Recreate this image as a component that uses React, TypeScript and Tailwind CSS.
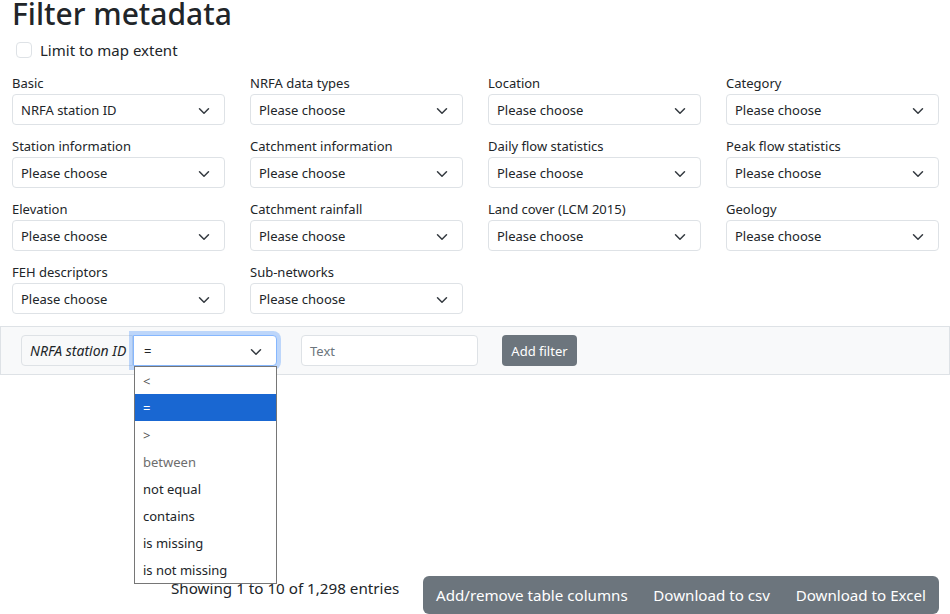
import React from "react";

const font = { fontFamily: '"Noto Sans", sans-serif' };

function Chevron({ className }: { className?: string }) {
  return (
    <svg viewBox="0 0 16 16" className={className} fill="none" stroke="#343a40" strokeWidth="2" strokeLinecap="round" strokeLinejoin="round">
      <path d="m2 5 6 6 6-6" />
    </svg>
  );
}

function Field({ label, value = "Please choose" }: { label: string; value?: string }) {
  return (
    <div className="flex flex-col">
      <label className="h-[22px] text-[13px] leading-[22px] text-[#212529] whitespace-nowrap">{label}</label>
      <div className="flex h-[31px] items-center justify-between rounded border border-[#dee2e6] bg-white pl-2 pr-[14px] pt-[2px] text-[13px] text-[#212529]">
        <span className="whitespace-nowrap">{value}</span>
        <Chevron className="h-[12px] w-[12px]" />
      </div>
    </div>
  );
}

const fields = [
  ["Basic", "NRFA station ID"],
  ["NRFA data types"],
  ["Location"],
  ["Category"],
  ["Station information"],
  ["Catchment information"],
  ["Daily flow statistics"],
  ["Peak flow statistics"],
  ["Elevation"],
  ["Catchment rainfall"],
  ["Land cover (LCM 2015)"],
  ["Geology"],
  ["FEH descriptors"],
  ["Sub-networks"],
];

const options = ["<", "=", ">", "between", "not equal", "contains", "is missing", "is not missing"];

export default function App() {
  return (
    <div className="relative h-[614px] w-[950px] overflow-hidden bg-white text-[#212529]" style={font}>
      <h2 className="h-[41px] pl-[12px] text-[30px] font-medium leading-[27px] text-[#212529]">Filter metadata</h2>
      <div className="mt-[-1px] flex h-[20px] items-center pl-4">
        <span className="h-4 w-4 rounded border border-[#dee2e6] bg-white" />
        <span className="ml-2 text-[15px] leading-5">Limit to map extent</span>
      </div>
      <div className="mt-[12px] grid grid-cols-4 gap-x-[25px] gap-y-[10px] pl-3 pr-[11px]">
        {fields.map(([l, v]) => (
          <Field key={l} label={l} value={v} />
        ))}
      </div>
      <div className="mt-3 flex h-[49px] items-center border border-[#dee2e6] bg-[#f8f9fa] pl-5">
        <div className="flex h-[31px] w-[112px] items-center rounded-l border border-[#dee2e6] bg-[#f8f9fa] pl-2 text-[14px] italic whitespace-nowrap">NRFA station ID</div>
        <div className="flex h-[31px] w-[144px] items-center justify-between rounded-r border border-[#86b7fe] bg-white pl-[10px] pr-[14px] pt-[2px] text-[13px] shadow-[0_0_0_4px_rgba(13,110,253,0.25)]">
          <span>=</span>
          <Chevron className="h-[12px] w-[12px]" />
        </div>
        <div className="ml-6 flex h-[31px] w-[177px] items-center rounded border border-[#dee2e6] bg-white pl-2 pt-[2px] text-[13px] text-[#6c757d]">Text</div>
        <div className="ml-6 flex h-[31px] w-[75px] items-center justify-center rounded bg-[#6c757d] pt-[2px] text-[13px] text-white whitespace-nowrap">Add filter</div>
      </div>
      <div className="absolute left-[134px] top-[366px] z-10 w-[143px] border border-[#767676] bg-white text-[13px]">
        {options.map((o) => (
          <div
            key={o}
            className={
              "flex h-[27px] items-center pl-2 pt-[3px] " +
              (o === "=" ? "bg-[#1967d2] text-white" : o === "between" ? "text-[#6d6d6d]" : o === "<" || o === ">" ? "text-[#555]" : "text-[#212529]")
            }
          >
            {o}
          </div>
        ))}
      </div>
      <div className="mt-[201px] flex items-start pl-[171px]">
        <span className="mt-[2px] w-[252px] text-[15.2px] leading-5 whitespace-nowrap">Showing 1 to 10 of 1,298 entries</span>
        <div className="flex h-[38px] w-[516px] items-center justify-between rounded-md bg-[#6c757d] px-[13px] text-[15.15px] text-white whitespace-nowrap">
          <span>Add/remove table columns</span>
          <span>Download to csv</span>
          <span>Download to Excel</span>
        </div>
      </div>
    </div>
  );
}
